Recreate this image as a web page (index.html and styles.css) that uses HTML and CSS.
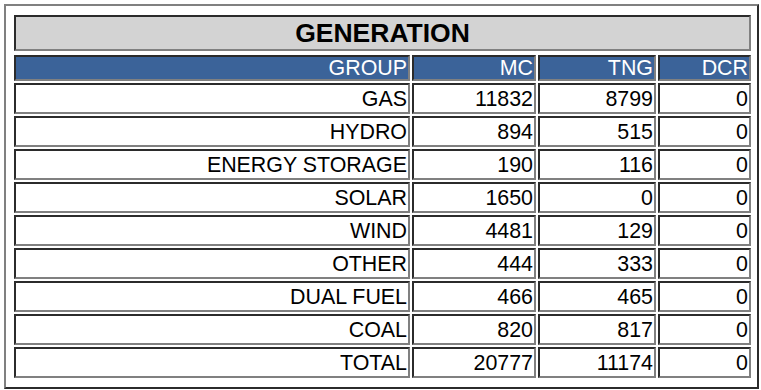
FILE: index.html
```html
<!DOCTYPE html>
<html>
<head>
<meta charset="utf-8">
<link rel="stylesheet" href="styles.css">
</head>
<body>
<div class="frame">
  <div class="title">GENERATION</div>
  <div class="grid">
    <div class="cell head">GROUP</div><div class="cell head">MC</div><div class="cell head">TNG</div><div class="cell head">DCR</div>
    <div class="cell">GAS</div><div class="cell">11832</div><div class="cell">8799</div><div class="cell">0</div>
    <div class="cell">HYDRO</div><div class="cell">894</div><div class="cell">515</div><div class="cell">0</div>
    <div class="cell">ENERGY STORAGE</div><div class="cell">190</div><div class="cell">116</div><div class="cell">0</div>
    <div class="cell">SOLAR</div><div class="cell">1650</div><div class="cell">0</div><div class="cell">0</div>
    <div class="cell">WIND</div><div class="cell">4481</div><div class="cell">129</div><div class="cell">0</div>
    <div class="cell">OTHER</div><div class="cell">444</div><div class="cell">333</div><div class="cell">0</div>
    <div class="cell">DUAL FUEL</div><div class="cell">466</div><div class="cell">465</div><div class="cell">0</div>
    <div class="cell">COAL</div><div class="cell">820</div><div class="cell">817</div><div class="cell">0</div>
    <div class="cell">TOTAL</div><div class="cell">20777</div><div class="cell">11174</div><div class="cell">0</div>
  </div>
</div>
</body>
</html>
```
FILE: styles.css
```css
html, body {
  background: #ffffff;
}
body {
  margin: 4px 2px 1px 4px;
  font-family: "Liberation Sans", Arial, sans-serif;
  color: #000000;
}
.frame {
  box-sizing: border-box;
  width: 755px;
  height: 385px;
  border: 2px solid;
  border-color: #808080 #2b2b2b #2b2b2b #808080;
  padding: 9px 6px 9px 8px;
}
.title {
  box-sizing: border-box;
  height: 36px;
  margin-bottom: 4px;
  background: #d3d3d3;
  border: 2px solid;
  border-color: #2b2b2b #808080 #808080 #2b2b2b;
  display: flex;
  align-items: center;
  justify-content: center;
  font-size: 26.5px;
  font-weight: bold;
  line-height: 1;
}
.grid {
  display: grid;
  grid-template-columns: 396px 124px 118px 93px;
  grid-template-rows: 26px repeat(9, 31px);
  gap: 2px;
}
.cell {
  box-sizing: border-box;
  border: 2px solid;
  border-color: #2b2b2b #808080 #808080 #2b2b2b;
  display: flex;
  align-items: center;
  justify-content: flex-end;
  padding: 2px 1px 0 0;
  font-size: 21.4px;
  line-height: 1;
  white-space: nowrap;
}
.head {
  background: #3b6399;
  color: #ffffff;
}
```
